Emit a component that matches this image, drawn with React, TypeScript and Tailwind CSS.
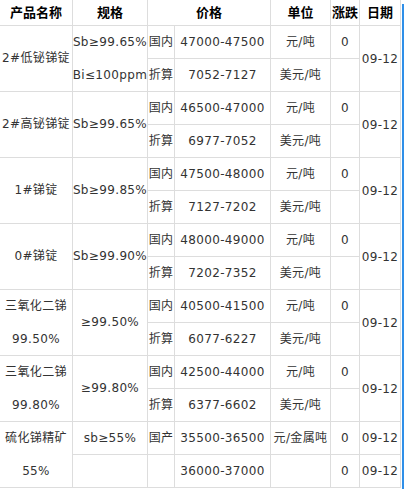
import React from 'react';

type Group = {
  name: string[];
  spec: string[];
  specSplit?: boolean;
  rows: { area: string; price: string; unit: string; change: string; date?: string }[];
  date?: string;
};

const groups: Group[] = [
  {
    name: ['2#低铋锑锭'],
    spec: ['Sb≥99.65%', 'Bi≤100ppm'],
    rows: [
      { area: '国内', price: '47000-47500', unit: '元/吨', change: '0' },
      { area: '折算', price: '7052-7127', unit: '美元/吨', change: '' },
    ],
    date: '09-12',
  },
  {
    name: ['2#高铋锑锭'],
    spec: ['Sb≥99.65%'],
    rows: [
      { area: '国内', price: '46500-47000', unit: '元/吨', change: '0' },
      { area: '折算', price: '6977-7052', unit: '美元/吨', change: '' },
    ],
    date: '09-12',
  },
  {
    name: ['1#锑锭'],
    spec: ['Sb≥99.85%'],
    rows: [
      { area: '国内', price: '47500-48000', unit: '元/吨', change: '0' },
      { area: '折算', price: '7127-7202', unit: '美元/吨', change: '' },
    ],
    date: '09-12',
  },
  {
    name: ['0#锑锭'],
    spec: ['Sb≥99.90%'],
    rows: [
      { area: '国内', price: '48000-49000', unit: '元/吨', change: '0' },
      { area: '折算', price: '7202-7352', unit: '美元/吨', change: '' },
    ],
    date: '09-12',
  },
  {
    name: ['三氧化二锑', '99.50%'],
    spec: ['≥99.50%'],
    rows: [
      { area: '国内', price: '40500-41500', unit: '元/吨', change: '0' },
      { area: '折算', price: '6077-6227', unit: '美元/吨', change: '' },
    ],
    date: '09-12',
  },
  {
    name: ['三氧化二锑', '99.80%'],
    spec: ['≥99.80%'],
    rows: [
      { area: '国内', price: '42500-44000', unit: '元/吨', change: '0' },
      { area: '折算', price: '6377-6602', unit: '美元/吨', change: '' },
    ],
    date: '09-12',
  },
  {
    name: ['硫化锑精矿', '55%'],
    spec: ['sb≥55%', ''],
    specSplit: true,
    rows: [
      { area: '国产', price: '35500-36500', unit: '元/金属吨', change: '0', date: '09-12' },
      { area: '', price: '36000-37000', unit: '', change: '0', date: '09-12' },
    ],
  },
];

const cell = 'flex items-center justify-center border-r border-b border-[#dddddd] whitespace-nowrap';
const head = `${cell} font-bold text-[13px] tracking-normal text-black`;

const Lines = ({ lines }: { lines: string[] }) => (
  <div className="flex flex-col items-center leading-[33px]">
    {lines.map((l, i) => (
      <span key={i}>{l}</span>
    ))}
  </div>
);

export default function App() {
  return (
    <div className="flex bg-white w-[405px] h-[489px] overflow-hidden">
      <div
        className="grid grid-cols-[73px_75px_27px_96px_60px_29px_41px] grid-rows-[26px_repeat(14,33px)] w-[401px] text-[12px] tracking-[0.35px] text-[#333333]"
        style={{ fontFamily: '"DejaVu Sans", "Noto Sans CJK SC", sans-serif' }}
      >
        <div className={head}>产品名称</div>
        <div className={head}>规格</div>
        <div className={`${head} col-span-2`}>价格</div>
        <div className={head}>单位</div>
        <div className={head}>涨跌</div>
        <div className={head}>日期</div>

        {groups.map((g, gi) => (
          <React.Fragment key={gi}>
            <div className={`${cell} row-span-2`}>
              <Lines lines={g.name} />
            </div>
            {!g.specSplit && (
              <div className={`${cell} row-span-2`}>
                <Lines lines={g.spec} />
              </div>
            )}
            {g.rows.map((r, ri) => (
              <React.Fragment key={ri}>
                {g.specSplit && <div className={cell}>{g.spec[ri]}</div>}
                <div className={cell}>{r.area}</div>
                <div className={cell}>{r.price}</div>
                <div className={cell}>{r.unit}</div>
                <div className={cell}>{r.change}</div>
                {r.date && <div className={cell}>{r.date}</div>}
                {ri === 0 && g.date && <div className={`${cell} row-span-2`}>{g.date}</div>}
              </React.Fragment>
            ))}
          </React.Fragment>
        ))}
      </div>
      <div className="mt-[4px] ml-[1px] w-[2px] bg-[#2f8fe8]" />
    </div>
  );
}
